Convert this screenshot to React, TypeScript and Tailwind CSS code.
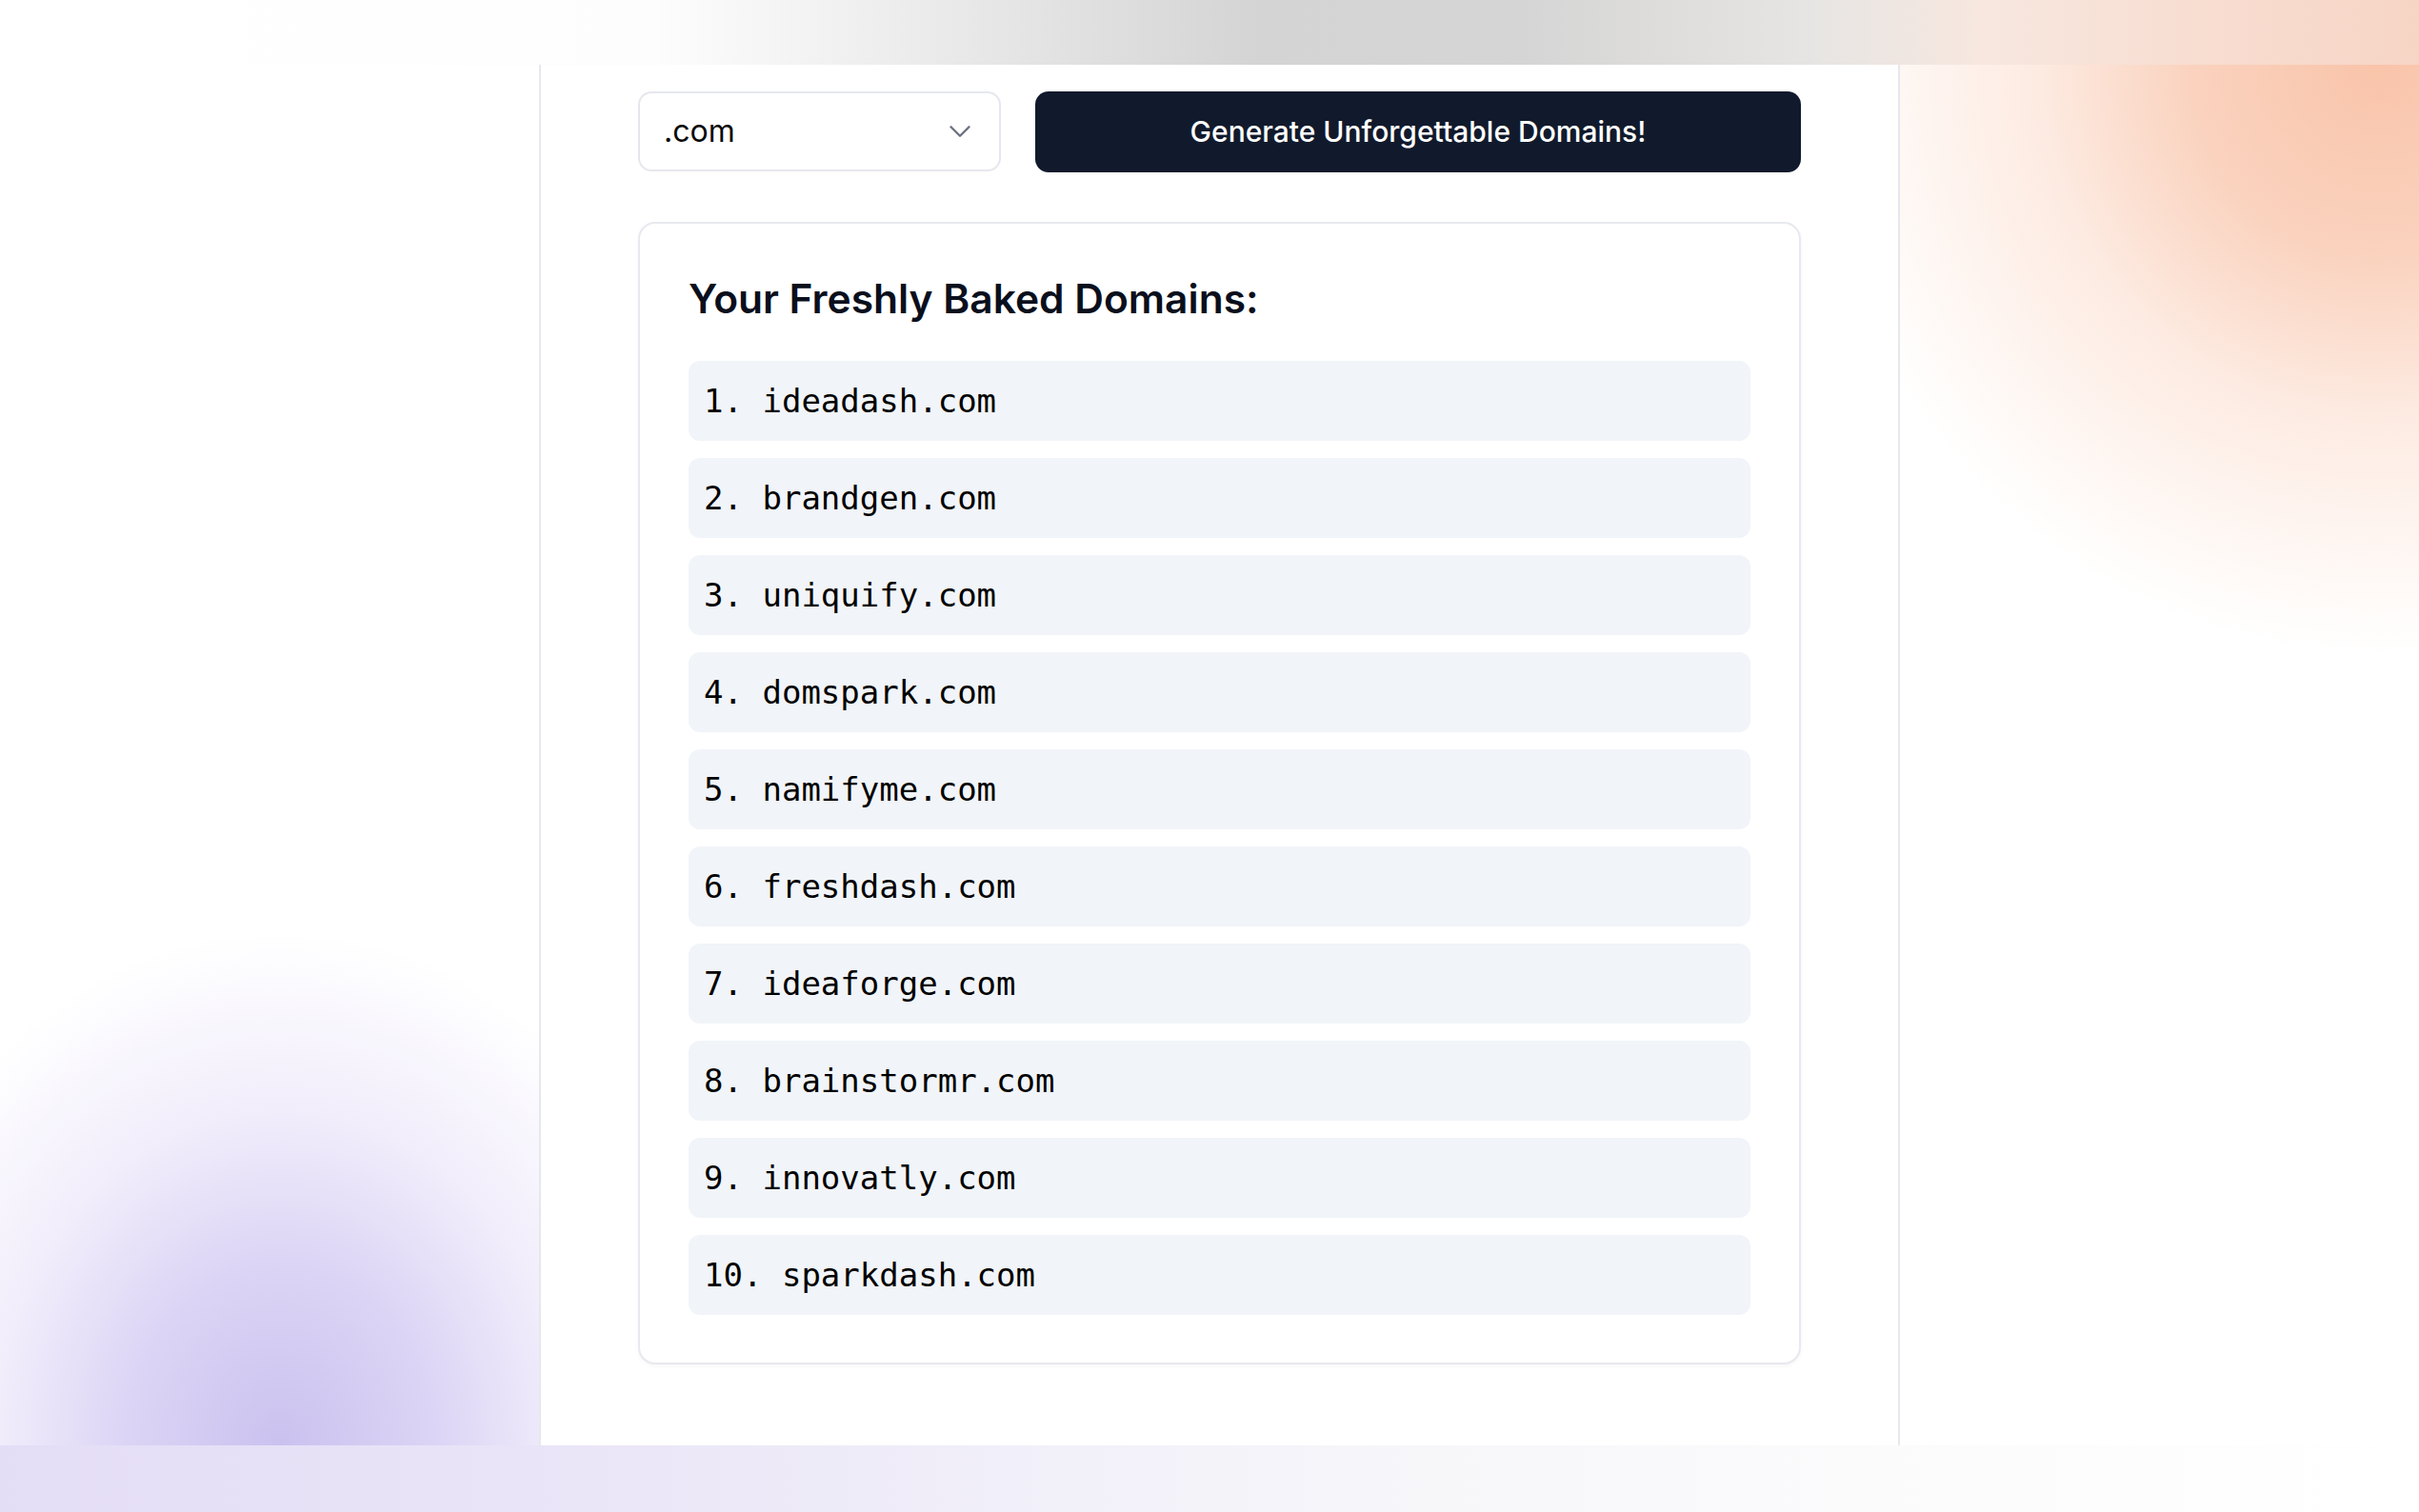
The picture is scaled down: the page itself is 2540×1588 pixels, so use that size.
import { ChevronDown } from "lucide-react"

const DOMAINS = [
  "ideadash.com",
  "brandgen.com",
  "uniquify.com",
  "domspark.com",
  "namifyme.com",
  "freshdash.com",
  "ideaforge.com",
  "brainstormr.com",
  "innovatly.com",
  "sparkdash.com",
]

export default function App() {
  return (
    <div className="w-[2540px] h-[1588px] flex flex-col overflow-hidden bg-white font-['Inter','Liberation_Sans',sans-serif]">
      {/* top strip */}
      <div className="h-[68px] shrink-0 bg-[linear-gradient(to_right,#ffffff_0%,#fdfdfd_27%,#e8e8e8_40%,#d4d4d4_52%,#d5d5d5_63%,#e7e5e3_75%,#f7e7df_82%,#f8dccf_92%,#f6d5c5_100%)]" />

      <div className="flex flex-1 min-h-0">
        {/* left side */}
        <div className="w-[566px] shrink-0 bg-[radial-gradient(ellipse_460px_540px_at_52%_100%,#cbc1ef_0%,#dcd4f5_35%,#f1edfb_65%,#ffffff_100%)]" />

        {/* panel */}
        <main className="w-[1429px] shrink-0 bg-white border-x-2 border-[#e7e8ee] pt-[28px] flex flex-col items-center">
          <div className="w-[1221px] flex flex-col">
            <div className="flex gap-[36px]">
              <div className="w-[381px] h-[84px] rounded-[14px] border-2 border-[#e6e7ee] bg-white flex items-center justify-between pl-[25px] pr-[22px]">
                <span className="text-[32px] text-[#0a0a0a]">.com</span>
                <ChevronDown size={38} strokeWidth={1.5} className="text-[#6b7280]" />
              </div>
              <button className="flex-1 h-[85px] rounded-[14px] bg-[#111a2c] text-white text-[30px] font-medium flex items-center justify-center">
                Generate Unforgettable Domains!
              </button>
            </div>

            <section className="mt-[52px] rounded-[18px] border-2 border-[#e8e9ee] bg-white shadow-[0_2px_4px_rgba(0,0,0,0.04)] px-[51px] pt-[51px] pb-[50px]">
              <h2 className="text-[42.5px] leading-[56px] font-semibold text-[#0a0f1c] mb-[37px]">
                Your Freshly Baked Domains:
              </h2>
              <ul className="flex flex-col gap-[18px]">
                {DOMAINS.map((d, i) => (
                  <li
                    key={d}
                    className="h-[84px] rounded-[12px] bg-[#f1f4f8] flex items-center pl-[16px] text-[34px] text-black font-['DejaVu_Sans_Mono','Liberation_Mono',monospace]"
                  >
                    {i + 1}. {d}
                  </li>
                ))}
              </ul>
            </section>
          </div>
        </main>

        {/* right side */}
        <div className="flex-1 bg-[radial-gradient(ellipse_600px_620px_at_92%_0%,#f9c4aa_0%,#fad2be_32%,#fdebe2_60%,#ffffff_100%)]" />
      </div>

      {/* bottom strip */}
      <div className="h-[70px] shrink-0 bg-[linear-gradient(to_right,#e4ddf6_0%,#e9e4f7_22%,#f1eff9_42%,#f7f7fa_60%,#fbfbfc_78%,#ffffff_100%)]" />
    </div>
  )
}
